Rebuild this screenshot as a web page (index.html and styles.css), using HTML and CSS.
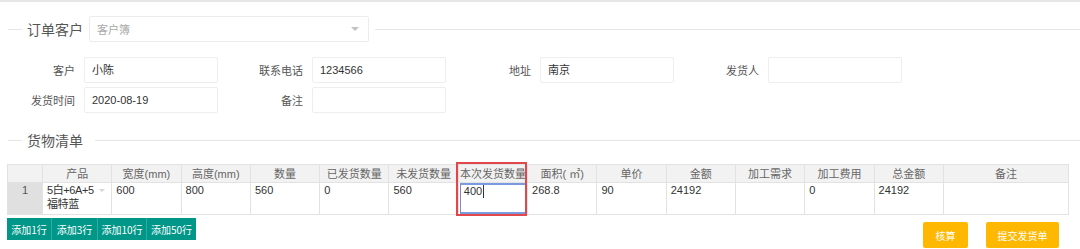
FILE: index.html
```html
<!DOCTYPE html>
<html lang="zh">
<head>
<meta charset="utf-8">
<link rel="stylesheet" href="styles.css">
</head>
<body>
<div class="page">
  <div class="sec-head">
    <span class="line-short"></span>
    <span class="sec-title">订单客户</span>
    <div class="select"><span class="ph">客户簿</span><span class="arrow"></span></div>
    <span class="line-rest"></span>
  </div>

  <div class="fields">
    <div class="frow">
      <div class="field"><label class="lab">客户</label><div class="inp">小陈</div></div>
      <div class="field"><label class="lab">联系电话</label><div class="inp">1234566</div></div>
      <div class="field"><label class="lab">地址</label><div class="inp">南京</div></div>
      <div class="field"><label class="lab">发货人</label><div class="inp"></div></div>
    </div>
    <div class="frow">
      <div class="field"><label class="lab">发货时间</label><div class="inp">2020-08-19</div></div>
      <div class="field"><label class="lab">备注</label><div class="inp"></div></div>
    </div>
  </div>

  <div class="sec-head sec2">
    <span class="line-short"></span>
    <span class="sec-title">货物清单</span>
    <span class="line-rest"></span>
  </div>

  <div class="tbl-wrap">
    <table class="tbl">
      <colgroup>
        <col class="c-idx">
        <col class="c"><col class="c"><col class="c"><col class="c"><col class="c"><col class="c"><col class="c">
        <col class="c"><col class="c"><col class="c"><col class="c"><col class="c"><col class="c">
        <col>
      </colgroup>
      <thead>
        <tr>
          <th></th><th>产品</th><th>宽度(mm)</th><th>高度(mm)</th><th>数量</th><th>已发货数量</th><th>未发货数量</th><th>本次发货数量</th><th>面积( ㎡)</th><th>单价</th><th>金额</th><th>加工需求</th><th>加工费用</th><th>总金额</th><th>备注</th>
        </tr>
      </thead>
      <tbody>
        <tr>
          <td class="idx">1</td>
          <td class="prod">5白+6A+5<br>福特蓝<span class="mini-arrow"></span></td>
          <td>600</td><td>800</td><td>560</td><td>0</td><td>560</td>
          <td class="edit"><div class="cell-input">400<span class="caret"></span></div></td>
          <td>268.8</td><td>90</td><td>24192</td><td></td><td>0</td><td>24192</td><td></td>
        </tr>
      </tbody>
    </table>
    <div class="hl-box"></div>
  </div>

  <div class="actions">
    <div class="add-group">
      <button class="btn-teal">添加1行</button><button class="btn-teal">添加3行</button><button class="btn-teal">添加10行</button><button class="btn-teal">添加50行</button>
    </div>
    <div class="right-group">
      <button class="btn-warm w1">核算</button>
      <button class="btn-warm w2">提交发货单</button>
    </div>
  </div>
</div>
</body>
</html>
```

FILE: styles.css
```css
html, body {
  margin: 0;
  padding: 0;
  background: #fff;
}
body {
  border-top: 2px solid #e6e6e6;
  font-family: "Liberation Sans", "Noto Sans CJK SC", sans-serif;
  color: #333;
  font-size: 11px;
  width: 1080px;
  height: 247px;
  overflow: hidden;
}
.page {
  padding: 14px 0 0 0;
}
.sec-head {
  display: flex;
  align-items: center;
  height: 26px;
  padding-left: 8px;
}
.line-short {
  width: 14px;
  border-top: 1px solid #e6e6e6;
}
.line-rest {
  flex: 1;
  border-top: 1px solid #e6e6e6;
  margin-left: 6px;
}
.sec-title {
  font-family: "Noto Sans CJK SC", sans-serif;
  font-size: 14px;
  color: #555;
  padding: 0 6px 0 5px;
  line-height: 20px;
}
.select {
  width: 280px;
  height: 26px;
  box-sizing: border-box;
  border: 1px solid #ececec;
  border-radius: 2px;
  display: flex;
  align-items: center;
  justify-content: space-between;
  padding: 0 8px 0 7px;
}
.ph {
  color: #aaa;
  font-size: 11px;
  font-family: "Noto Sans CJK SC", sans-serif;
}
.arrow {
  width: 0;
  height: 0;
  border-left: 4px solid transparent;
  border-right: 4px solid transparent;
  border-top: 4px solid #c2c2c2;
  margin-right: 1px;
}
.fields {
  margin-top: 15px;
  padding-left: 8px;
  display: flex;
  flex-direction: column;
  gap: 4px;
}
.frow {
  display: flex;
}
.field {
  display: flex;
  align-items: center;
  margin-right: 18px;
}
.lab {
  width: 67px;
  margin-right: 9px;
  text-align: right;
  color: #555;
  font-family: "Noto Sans CJK SC", sans-serif;
  font-size: 11px;
}
.inp {
  width: 134px;
  height: 26px;
  box-sizing: border-box;
  border: 1px solid #eeeeee;
  border-radius: 2px;
  padding-left: 7px;
  line-height: 24px;
  color: #333;
  font-size: 11px;
}
.sec2 {
  margin-top: 17px;
  height: 20px;
}
.tbl-wrap {
  position: relative;
  margin: 14px 11px 0 7px;
}
.tbl {
  width: 100%;
  table-layout: fixed;
  border-collapse: collapse;
  font-size: 11px;
}
.c-idx { width: 35px; }
.c { width: 69.3px; }
.tbl th, .tbl td {
  border: 1px solid #e2e2e2;
  padding: 0 4px;
  overflow: hidden;
  white-space: nowrap;
}
.tbl th {
  background: #f2f2f2;
  height: 17px;
  font-weight: normal;
  color: #666;
  text-align: center;
  line-height: 16px;
  padding: 0 1px;
}
.tbl td {
  height: 29px;
  vertical-align: top;
  line-height: 14px;
  padding-top: 0;
  color: #333;
}
.tbl td.idx {
  background: #e0e0e0;
  text-align: center;
  color: #555;
}
.tbl td.prod {
  position: relative;
  white-space: normal;
  padding-right: 10px;
  letter-spacing: -0.4px;
}
.mini-arrow {
  position: absolute;
  right: 6px;
  top: 6px;
  border-left: 3px solid transparent;
  border-right: 3px solid transparent;
  border-top: 3px solid #d6d6d6;
}
.tbl td.edit {
  padding: 0 1px;
}
.cell-input {
  height: 31px;
  box-sizing: border-box;
  border: 1px solid #8a7fc8;
  border-top: 2px solid #7b9be0;
  border-bottom: 2px solid #7b9be0;
  padding: 0 3px;
  line-height: 13px;
  background: #fff;
  display: flex;
  align-items: flex-start;
}
.caret {
  display: inline-block;
  width: 1px;
  height: 13px;
  background: #333;
  margin-left: 1px;
}
.hl-box {
  position: absolute;
  left: 449px;
  top: -2px;
  width: 71px;
  height: 54px;
  box-sizing: border-box;
  border: 2px solid #e2474b;
  pointer-events: none;
}
.actions {
  display: flex;
  justify-content: space-between;
  align-items: flex-start;
  margin: 3px 21px 0 7px;
}
.add-group {
  display: flex;
}
.btn-teal {
  background: #009688;
  color: #fff;
  border: none;
  border-right: 1px solid #33aa9f;
  height: 22px;
  padding: 0;
  font-family: "Noto Sans CJK SC", sans-serif;
  font-size: 10px;
  width: 45px;
}
.btn-teal:nth-child(2) { width: 46px; }
.btn-teal:nth-child(3) { width: 49px; }
.btn-teal:nth-child(4) { width: 49px; border-right: none; }
.right-group {
  display: flex;
  gap: 18px;
  margin-top: 4px;
}
.btn-warm {
  background: #ffb800;
  color: #fff;
  border: none;
  border-radius: 2px;
  height: 26px;
  padding: 0;
  font-family: "Noto Sans CJK SC", sans-serif;
  font-size: 10px;
}
.w1 { width: 45px; }
.w2 { width: 73px; }
```
